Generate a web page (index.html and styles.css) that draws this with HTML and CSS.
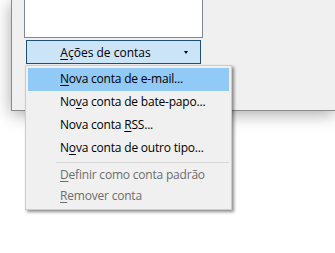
FILE: index.html
```html
<!DOCTYPE html>
<html lang="pt-BR">
<head>
    <meta charset="UTF-8">
    <title>Ações de contas</title>
    <link rel="stylesheet" href="styles.css">
</head>
<body>
    <div class="window">
        <div class="account-list"></div>
        <button class="actions-btn">
            <span class="btn-label"><u>A</u>ções de contas</span>
            <span class="btn-arrow"></span>
        </button>
    </div>

    <div class="menu">
        <div class="menu-item active"><u>N</u>ova conta de e-mail...</div>
        <div class="menu-item">No<u>v</u>a conta de bate-papo...</div>
        <div class="menu-item">Nova conta <u>R</u>SS...</div>
        <div class="menu-item">N<u>o</u>va conta de outro tipo...</div>
        <div class="menu-sep"></div>
        <div class="menu-item disabled"><u>D</u>efinir como conta padrão</div>
        <div class="menu-item disabled"><u>R</u>emover conta</div>
    </div>
</body>
</html>
```

FILE: styles.css
```css
:root {
    --win-bg: #f0f0f0;
    --menu-bg: #f0f0f0;
    --hl-bg: #91c9f7;
    --btn-bg: #cce4f7;
    --btn-border: #1f4e79;
    --text: #000000;
    --muted: #6d6d6d;
}

body {
    margin: 0;
    background: #ffffff;
    font-family: "Segoe UI", "Open Sans", "Noto Sans", sans-serif;
    font-size: 12px;
    letter-spacing: -0.2px;
    color: var(--text);
    position: relative;
    height: 253px;
    overflow: hidden;
}

u {
    text-decoration: underline;
    text-underline-offset: 2px;
}

.window {
    margin-left: 11px;
    height: 111px;
    background: var(--win-bg);
    border-left: 1px solid #8a8a8a;
    border-bottom: 1px solid #8a8a8a;
    box-shadow: 0 3px 16px rgba(0, 0, 0, 0.35);
    padding-left: 12px;
    box-sizing: border-box;
}

.account-list {
    width: 179px;
    height: 38px;
    background: #ffffff;
    border: 1px solid #828790;
    border-top: none;
    box-sizing: border-box;
}

.actions-btn {
    margin: 2px 0 0 2px;
    width: 175px;
    height: 24px;
    background: var(--btn-bg);
    border: 1px solid var(--btn-border);
    font: inherit;
    color: var(--text);
    padding: 0;
    display: flex;
    align-items: center;
    position: relative;
}

.btn-label {
    flex: 1;
    text-align: center;
    padding-right: 16px;
}

.btn-arrow {
    position: absolute;
    right: 12px;
    top: 10px;
    width: 0;
    height: 0;
    border-left: 2.5px solid transparent;
    border-right: 2.5px solid transparent;
    border-top: 3px solid #000;
}

.menu {
    position: absolute;
    left: 25px;
    top: 65px;
    width: 207px;
    background: var(--menu-bg);
    border: 1px solid #cccccc;
    padding: 2px;
    box-sizing: border-box;
    box-shadow: 2px 2px 3px rgba(0, 0, 0, 0.45);
}

.menu-item {
    height: 23px;
    line-height: 22px;
    padding-left: 32px;
    white-space: nowrap;
}

.menu-item.active {
    background: var(--hl-bg);
}

.menu-item.disabled {
    height: 21px;
    line-height: 20px;
    color: var(--muted);
}

.menu-sep {
    height: 1px;
    background: #d7d7d7;
    margin: 2px 0 2px 28px;
}
```
